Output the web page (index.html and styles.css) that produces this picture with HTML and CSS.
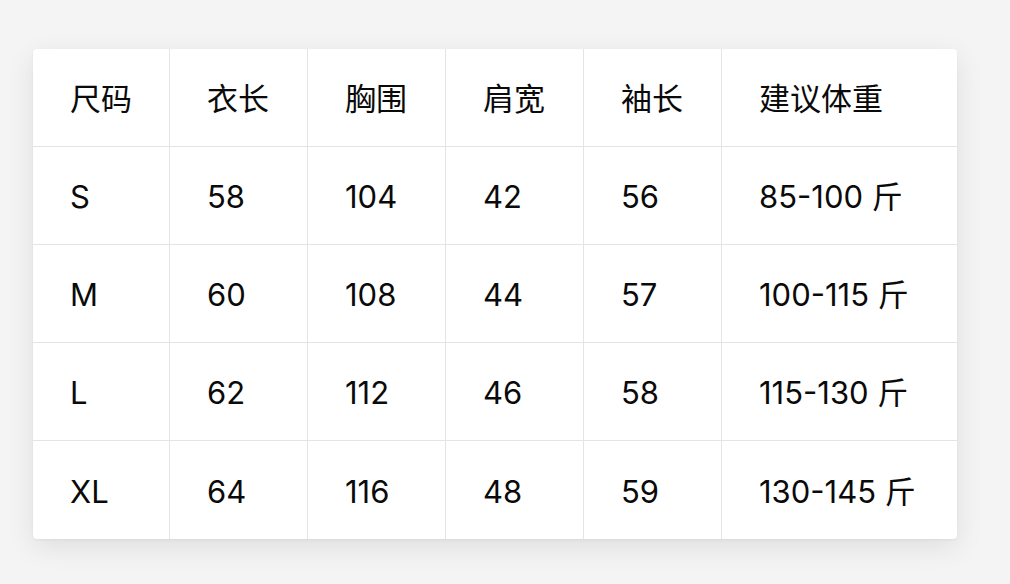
FILE: index.html
```html
<!DOCTYPE html>
<html lang="zh-CN">
<head>
<meta charset="utf-8">
<link rel="stylesheet" href="styles.css">
</head>
<body>
<div class="page">
  <div class="card">
    <div class="grid">
      <div class="cell">尺码</div><div class="cell">衣长</div><div class="cell">胸围</div><div class="cell">肩宽</div><div class="cell">袖长</div><div class="cell last">建议体重</div>
      <div class="cell">S</div><div class="cell">58</div><div class="cell">104</div><div class="cell">42</div><div class="cell">56</div><div class="cell last">85-100 斤</div>
      <div class="cell">M</div><div class="cell">60</div><div class="cell">108</div><div class="cell">44</div><div class="cell">57</div><div class="cell last">100-115 斤</div>
      <div class="cell">L</div><div class="cell">62</div><div class="cell">112</div><div class="cell">46</div><div class="cell">58</div><div class="cell last">115-130 斤</div>
      <div class="cell bottom">XL</div><div class="cell bottom">64</div><div class="cell bottom">116</div><div class="cell bottom">48</div><div class="cell bottom">59</div><div class="cell bottom last">130-145 斤</div>
    </div>
  </div>
</div>
</body>
</html>
```
FILE: styles.css
```css
html, body {
  margin: 0;
  padding: 0;
}
body {
  background: #f4f4f4;
  font-family: "Inter", "Noto Sans CJK SC", sans-serif;
  color: #0a0a0a;
}
.page {
  width: 1010px;
  height: 584px;
  padding: 49px 0 0 33px;
  box-sizing: border-box;
}
.card {
  width: 924px;
  background: #fff;
  border-radius: 4px;
  box-shadow: 0 8px 28px rgba(0, 0, 0, 0.09), 0 1px 3px rgba(0, 0, 0, 0.05);
  overflow: hidden;
}
.grid {
  display: grid;
  grid-template-columns: 137px 138px 138px 138px 138px 1fr;
  grid-auto-rows: 98px;
}
.cell {
  display: flex;
  align-items: center;
  padding: 2px 0 0 37px;
  font-size: 31px;
  line-height: 1;
  border-right: 1px solid #e4e4e4;
  border-bottom: 1px solid #e4e4e4;
  white-space: nowrap;
}
.cell.last {
  border-right: none;
}
.cell.bottom {
  border-bottom: none;
  height: 97px;
}
```
